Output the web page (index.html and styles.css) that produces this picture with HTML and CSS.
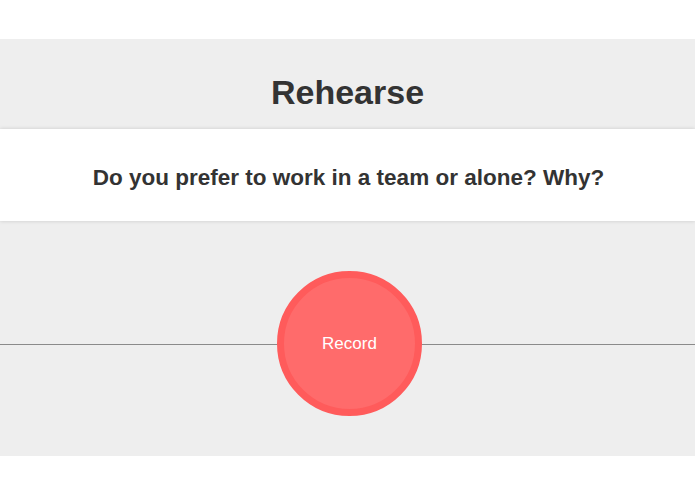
FILE: index.html
```html
<!DOCTYPE html>
<html>
<head>
<meta charset="utf-8">
<link rel="stylesheet" href="styles.css">
</head>
<body>
<main class="app">
  <header class="header"><h1 class="title">Rehearse</h1></header>
  <section class="card"><p class="question">Do you prefer to work in a team or alone? Why?</p></section>
  <section class="stage">
    <div class="line"></div>
    <button class="record">Record</button>
  </section>
</main>
</body>
</html>
```
FILE: styles.css
```css
html, body { margin: 0; padding: 0; background: #fff; }
body { font-family: "Liberation Sans", Arial, sans-serif; }
.app {
  margin-top: 39px;
  height: 417px;
  background: #eeeeee;
  display: flex;
  flex-direction: column;
}
.header {
  height: 90px;
  display: flex;
  align-items: center;
  justify-content: center;
}
.title {
  margin: 0;
  font-size: 34px;
  font-weight: 700;
  color: #333;
  padding-top: 16px;
}
.card {
  position: relative;
  z-index: 1;
  height: 92px;
  background: #fff;
  box-shadow: 0 0 4px rgba(0,0,0,0.16);
  display: flex;
  align-items: center;
  justify-content: center;
}
.question {
  margin: 0;
  font-size: 22.5px;
  font-weight: 700;
  color: #333;
  padding-top: 6px;
  padding-left: 2px;
}
.stage {
  flex: 1;
  position: relative;
  display: flex;
  align-items: center;
  justify-content: center;
  padding-top: 10px;
  box-sizing: border-box;
}
.line {
  position: absolute;
  left: 0;
  right: 0;
  top: 123px;
  height: 1px;
  background: #8a8a8a;
}
.record {
  position: relative;
  margin-left: 4px;
  width: 145px;
  height: 145px;
  border-radius: 50%;
  border: 7px solid #ff5b5b;
  background: #ff6b6b;
  color: #fff;
  font-family: "Liberation Sans", Arial, sans-serif;
  font-size: 17px;
  padding: 0;
  box-sizing: border-box;
}
```
